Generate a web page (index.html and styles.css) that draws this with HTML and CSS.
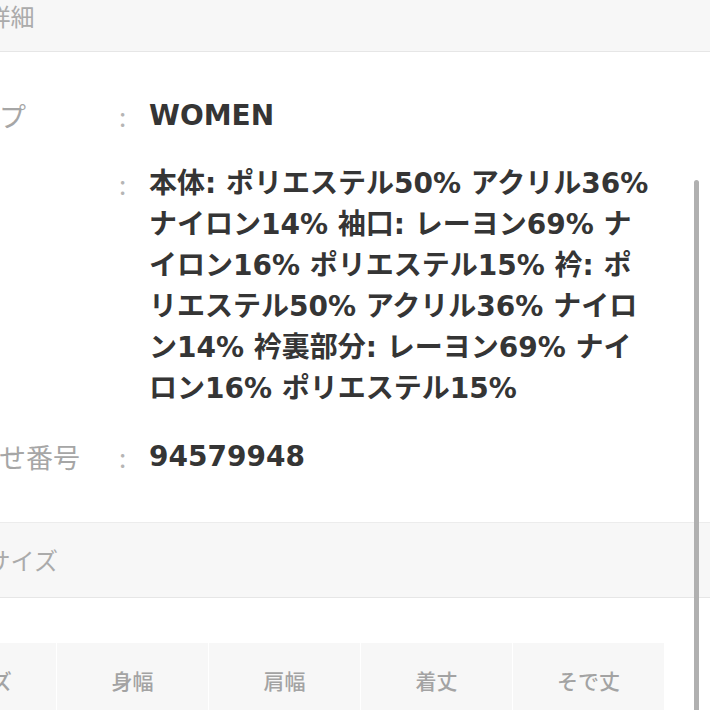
FILE: index.html
```html
<!DOCTYPE html>
<html lang="ja">
<head>
    <meta charset="UTF-8">
    <title>アイテム詳細</title>
    <link rel="stylesheet" href="styles.css">
</head>
<body>
    <div class="page">
        <div class="sec-head">アイテム詳細</div>
        <div class="spec">
            <div class="spec-row">
                <div class="spec-label">性別・タイプ</div>
                <div class="spec-colon">:</div>
                <div class="spec-value">WOMEN</div>
            </div>
            <div class="spec-row">
                <div class="spec-label">素材</div>
                <div class="spec-colon">:</div>
                <div class="spec-value">本体: ポリエステル50% アクリル36% ナイロン14% 袖口: レーヨン69% ナイロン16% ポリエステル15% 衿: ポリエステル50% アクリル36% ナイロン14% 衿裏部分: レーヨン69% ナイロン16% ポリエステル15%</div>
            </div>
            <div class="spec-row">
                <div class="spec-label">お問い合わせ番号</div>
                <div class="spec-colon">:</div>
                <div class="spec-value">94579948</div>
            </div>
        </div>
        <div class="sec-head sec-head-top">アイテムサイズ</div>
        <div class="size-table">
            <div class="size-cell">サイズ</div>
            <div class="size-cell">身幅</div>
            <div class="size-cell">肩幅</div>
            <div class="size-cell">着丈</div>
            <div class="size-cell">そで丈</div>
        </div>
    </div>
    <div class="scrollbar"></div>
</body>
</html>
```

FILE: styles.css
```css
html,body{
    margin: 0;
    padding: 0;
    background: #fff;
    overflow: hidden;
}
.page{
    width: 846px;
    margin: -23px 0 0 -136px;
    font-family: "Noto Sans CJK JP", sans-serif;
}
.sec-head{
    height: 74px;
    line-height: 78px;
    padding-left: 29px;
    background: #f7f7f7;
    border-bottom: 1px solid #e6e6e6;
    font-size: 24px;
    color: #ababab;
}
.sec-head-top{
    border-top: 1px solid #ececec;
    line-height: 74px;
}
.spec{
    display: flex;
    flex-direction: column;
    gap: 27px;
    padding: 43px 0 45px;
}
.spec-row{
    display: flex;
    line-height: 41px;
}
.spec-label{
    width: 252px;
    flex: none;
    font-size: 27px;
    color: #a6a6a6;
}
.spec-colon{
    width: 33px;
    flex: none;
    padding-left: 3px;
    box-sizing: border-box;
    font-size: 26px;
    color: #b5b5b5;
}
.spec-value{
    width: 504px;
    font-family: "DejaVu Sans", "Noto Sans CJK JP", sans-serif;
    font-size: 28px;
    font-weight: 700;
    color: #353535;
}
.size-table{
    display: flex;
    gap: 1px;
    margin: 45px 0 0 41px;
}
.size-cell{
    width: 151px;
    height: 74px;
    line-height: 74px;
    flex: none;
    background: #f7f7f7;
    text-align: center;
    font-size: 21px;
    font-weight: 500;
    color: #a3a3a3;
}
.scrollbar{
    position: absolute;
    left: 694px;
    top: 180px;
    width: 5px;
    height: 540px;
    border-radius: 3px;
    background: #b0b0b0;
}
```
